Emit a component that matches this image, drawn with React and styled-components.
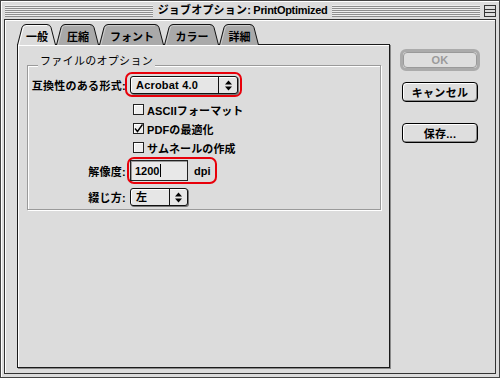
import React from 'react';
import styled, { createGlobalStyle } from 'styled-components';

const Global = createGlobalStyle`
  html, body { margin: 0; padding: 0; background: #dcdcdc; }
  * { box-sizing: border-box; }
`;

const FONT = `"Liberation Sans", "Noto Sans CJK JP", sans-serif`;

const Window = styled.div`
  width: 500px;
  height: 378px;
  display: flex;
  flex-direction: column;
  background: #dcdcdc;
  border: 1px solid #444;
  box-shadow: inset 1px 1px 0 #fff;
  padding: 0 3px 3px 3px;
  font-family: ${FONT};
  font-size: 11px;
  color: #000;
`;

const TitleBar = styled.div`
  height: 18px;
  display: flex;
  align-items: center;
  padding-left: 1px;
`;

const Stripes = styled.div`
  flex: 1;
  height: 12px;
  margin-top: 1px;
  background: repeating-linear-gradient(to bottom, #eeeeee 0 1px, #8e8e8e 1px 2px);
`;

const Title = styled.div`
  padding: 0 5px;
  font-size: 11px;
  white-space: nowrap;
  line-height: 16px;
`;

const TitleJa = styled.span`
  font-weight: 700;
  letter-spacing: 0.2px;
`;

const TitleEn = styled.span`
  font-weight: 700;
  letter-spacing: -0.3px;
`;

const BoxIcon = styled.svg`
  width: 12px;
  height: 12px;
  margin: 1px 0 0 4px;
  flex: none;
`;

const Content = styled.div`
  flex: 1;
  display: flex;
  border: 1px solid #333;
  box-shadow: inset 1px 1px 0 #fff;
  padding: 4px 0 0 12px;
`;

const TabArea = styled.div`
  width: 373px;
  display: flex;
  flex-direction: column;
`;

const TabRow = styled.div`
  display: flex;
  height: 21px;
  position: relative;
  z-index: 1;
`;

const Tab = styled.div`
  position: relative;
  width: ${(p) => p.$w}px;
  height: 21px;
  display: flex;
  justify-content: center;
  align-items: center;
  padding: 3px 0 0 1px;
  font-weight: 700;
  font-size: 11px;
`;

const TabShape = styled.svg`
  position: absolute;
  left: 0;
  top: 0;
`;

const TabLabel = styled.span`
  position: relative;
  white-space: nowrap;
`;

const Panel = styled.div`
  height: 324px;
  margin-top: -1px;
  border: 1px solid #1a1a1a;
  box-shadow: 1px 1px 0 #8a8a8a, inset 1px 1px 0 #fff;
  padding: 20px 8px 0 9px;
`;

const GroupBox = styled.div`
  display: flex;
  flex-direction: column;
  border: 1px solid #9a9a9a;
  box-shadow: inset 1px 1px 0 #fff, 1px 1px 0 #fff;
  padding-bottom: 3px;
`;

const Legend = styled.div`
  align-self: flex-start;
  margin: -12px 0 0 10px;
  height: 14px;
  line-height: 14px;
  padding: 0 2px;
  background: #dcdcdc;
  font-weight: 400;
  letter-spacing: 0.3px;
`;

const Row = styled.div`
  display: grid;
  grid-template-columns: 98px auto;
  column-gap: 4px;
  align-items: center;
  justify-content: start;
  height: ${(p) => p.$h}px;
  margin-top: ${(p) => p.$mt || 0}px;
`;

const Label = styled.div`
  text-align: right;
  font-weight: 700;
  white-space: nowrap;
  letter-spacing: 0.3px;
`;

const Highlight = styled.div`
  display: inline-flex;
  align-items: center;
  gap: ${(p) => p.$gap || 0}px;
  border: 2px solid #e8000a;
  border-radius: 7px;
  padding: ${(p) => p.$p};
  margin: ${(p) => p.$m};
  justify-self: start;
`;

const Popup = styled.div`
  display: flex;
  width: ${(p) => p.$w}px;
  height: 18px;
  border: 1px solid #111;
  border-radius: 3px;
  background: #e6e6e6;
  box-shadow: 1px 1px 0 #777, inset 1px 1px 0 #fff;
  justify-self: start;
`;

const PopupText = styled.div`
  flex: 1;
  padding-left: 5px;
  font-weight: 700;
  line-height: 16px;
  white-space: nowrap;
  letter-spacing: 0.2px;
`;

const PopupArrows = styled.div`
  width: ${(p) => p.$w}px;
  border-left: 1px solid #111;
  display: flex;
  align-items: center;
  justify-content: center;
`;

const TextInput = styled.div`
  width: 58px;
  height: 21px;
  border: 1px solid #222;
  background: #e8e8e8;
  box-shadow: inset 1px 1px 0 #999;
  display: flex;
  align-items: center;
  padding-left: 4px;
  font-weight: 700;
`;

const Caret = styled.span`
  display: inline-block;
  width: 1px;
  height: 13px;
  background: #000;
  margin-left: 1px;
`;

const Unit = styled.span`
  font-weight: 700;
  padding-right: 2px;
`;

const CheckLine = styled.div`
  grid-column: 2;
  display: flex;
  align-items: center;
  gap: 3px;
  margin-left: 3px;
  font-weight: 700;
  white-space: nowrap;
  letter-spacing: 0.1px;
`;

const CheckBox = styled.span`
  width: 11px;
  height: 11px;
  border: 1px solid #222;
  background: #eeeeee;
  box-shadow: inset 1px 1px 0 #fff;
  display: flex;
  align-items: center;
  justify-content: center;
`;

const ButtonColumn = styled.div`
  display: flex;
  flex-direction: column;
  align-items: flex-start;
  padding-top: 25px;
  margin-left: 10px;
`;

const DefaultRing = styled.div`
  width: 80px;
  height: 22px;
  border: 3px solid #ababab;
  border-radius: 6px;
  display: flex;
`;

const Button = styled.div`
  width: ${(p) => p.$w || 76}px;
  height: ${(p) => p.$h || 20}px;
  margin: ${(p) => p.$m || 0};
  flex: ${(p) => (p.$fill ? 1 : 'none')};
  border: 1px solid ${(p) => (p.$disabled ? '#9a9a9a' : '#000')};
  border-radius: 4px;
  background: #dedede;
  box-shadow: ${(p) =>
    p.$disabled ? 'none' : 'inset -1px -1px 0 #8a8a8a, inset 1px 1px 0 #fff'};
  color: ${(p) => (p.$disabled ? '#9a9a9a' : '#000')};
  display: flex;
  align-items: center;
  justify-content: center;
  font-weight: 700;
  letter-spacing: 0.3px;
  white-space: nowrap;
`;

function TabItem({ w, label, selected }) {
  const s = 5;
  const h = 21;
  const outline = `M0.5,${h} L${s},3.5 Q${s + 1},0.5 ${s + 4},0.5 L${w - s - 4},0.5 Q${w - s - 1},0.5 ${w - s},3.5 L${w - 0.5},${h}`;
  const hi = `M1.8,${h} L${s + 1.2},4 Q${s + 2},1.6 ${s + 4},1.6 L${w - s - 4},1.6`;
  return (
    <Tab $w={w}>
      <TabShape width={w} height={h} viewBox={`0 0 ${w} ${h}`}>
        <path d={outline} fill={selected ? '#dcdcdc' : '#a9a9a9'} stroke="none" />
        <path d={hi} fill="none" stroke={selected ? '#ffffff' : '#cdcdcd'} strokeWidth="1" />
        <path d={outline} fill="none" stroke="#111" strokeWidth="1" />
      </TabShape>
      <TabLabel>{label}</TabLabel>
    </Tab>
  );
}

function Arrows() {
  return (
    <svg width="7" height="11" viewBox="0 0 7 11">
      <path d="M3.5,0.5 L7,4.5 L0,4.5 Z" fill="#000" />
      <path d="M0,6.5 L7,6.5 L3.5,10.5 Z" fill="#000" />
    </svg>
  );
}

function Check() {
  return (
    <svg width="9" height="9" viewBox="0 0 9 9">
      <polyline points="1,4.5 3.5,7.5 8.5,0.5" fill="none" stroke="#000" strokeWidth="1.4" />
    </svg>
  );
}

const tabs = [
  { w: 39, label: '一般', selected: true },
  { w: 43, label: '圧縮' },
  { w: 65, label: 'フォント' },
  { w: 55, label: 'カラー' },
  { w: 40, label: '詳細' },
];

export default function App() {
  return (
    <>
      <Global />
      <Window>
        <TitleBar>
          <Stripes />
          <Title>
            <TitleJa>ジョブオプション</TitleJa>
            <TitleEn>: PrintOptimized</TitleEn>
          </Title>
          <Stripes />
          <BoxIcon viewBox="0 0 12 12">
            <rect x="0.5" y="0.5" width="11" height="11" fill="#dcdcdc" stroke="#333" />
            <line x1="1" y1="4.5" x2="11" y2="4.5" stroke="#333" />
            <line x1="1" y1="7.5" x2="11" y2="7.5" stroke="#333" />
          </BoxIcon>
        </TitleBar>
        <Content>
          <TabArea>
            <TabRow>
              {tabs.map((t) => (
                <TabItem key={t.label} {...t} />
              ))}
            </TabRow>
            <Panel>
              <GroupBox>
                <Legend>ファイルのオプション</Legend>
                <Row $h={18} $mt={8}>
                  <Label>互換性のある形式:</Label>
                  <Highlight $p="2px 2px 1px 3px" $m="-4px -4px -3px -5px">
                    <Popup $w={108}>
                      <PopupText>Acrobat 4.0</PopupText>
                      <PopupArrows $w={19}>
                        <Arrows />
                      </PopupArrows>
                    </Popup>
                  </Highlight>
                </Row>
                <Row $h={19} $mt={6}>
                  <CheckLine>
                    <CheckBox />
                    ASCIIフォーマット
                  </CheckLine>
                </Row>
                <Row $h={19}>
                  <CheckLine>
                    <CheckBox>
                      <Check />
                    </CheckBox>
                    PDFの最適化
                  </CheckLine>
                </Row>
                <Row $h={19}>
                  <CheckLine>
                    <CheckBox />
                    サムネールの作成
                  </CheckLine>
                </Row>
                <Row $h={21} $mt={3}>
                  <Label>解像度:</Label>
                  <Highlight $gap={6} $p="1px 2px 1px 1px" $m="-3px -4px -3px -3px">
                    <TextInput>
                      1200
                      <Caret />
                    </TextInput>
                    <Unit>dpi</Unit>
                  </Highlight>
                </Row>
                <Row $h={18} $mt={7}>
                  <Label>綴じ方:</Label>
                  <Popup $w={58}>
                    <PopupText>左</PopupText>
                    <PopupArrows $w={18}>
                      <Arrows />
                    </PopupArrows>
                  </Popup>
                </Row>
              </GroupBox>
            </Panel>
          </TabArea>
          <ButtonColumn>
            <DefaultRing>
              <Button $fill $disabled $h={16}>OK</Button>
            </DefaultRing>
            <Button $m="11px 0 0 2px">キャンセル</Button>
            <Button $m="21px 0 0 2px">保存...</Button>
          </ButtonColumn>
        </Content>
      </Window>
    </>
  );
}
